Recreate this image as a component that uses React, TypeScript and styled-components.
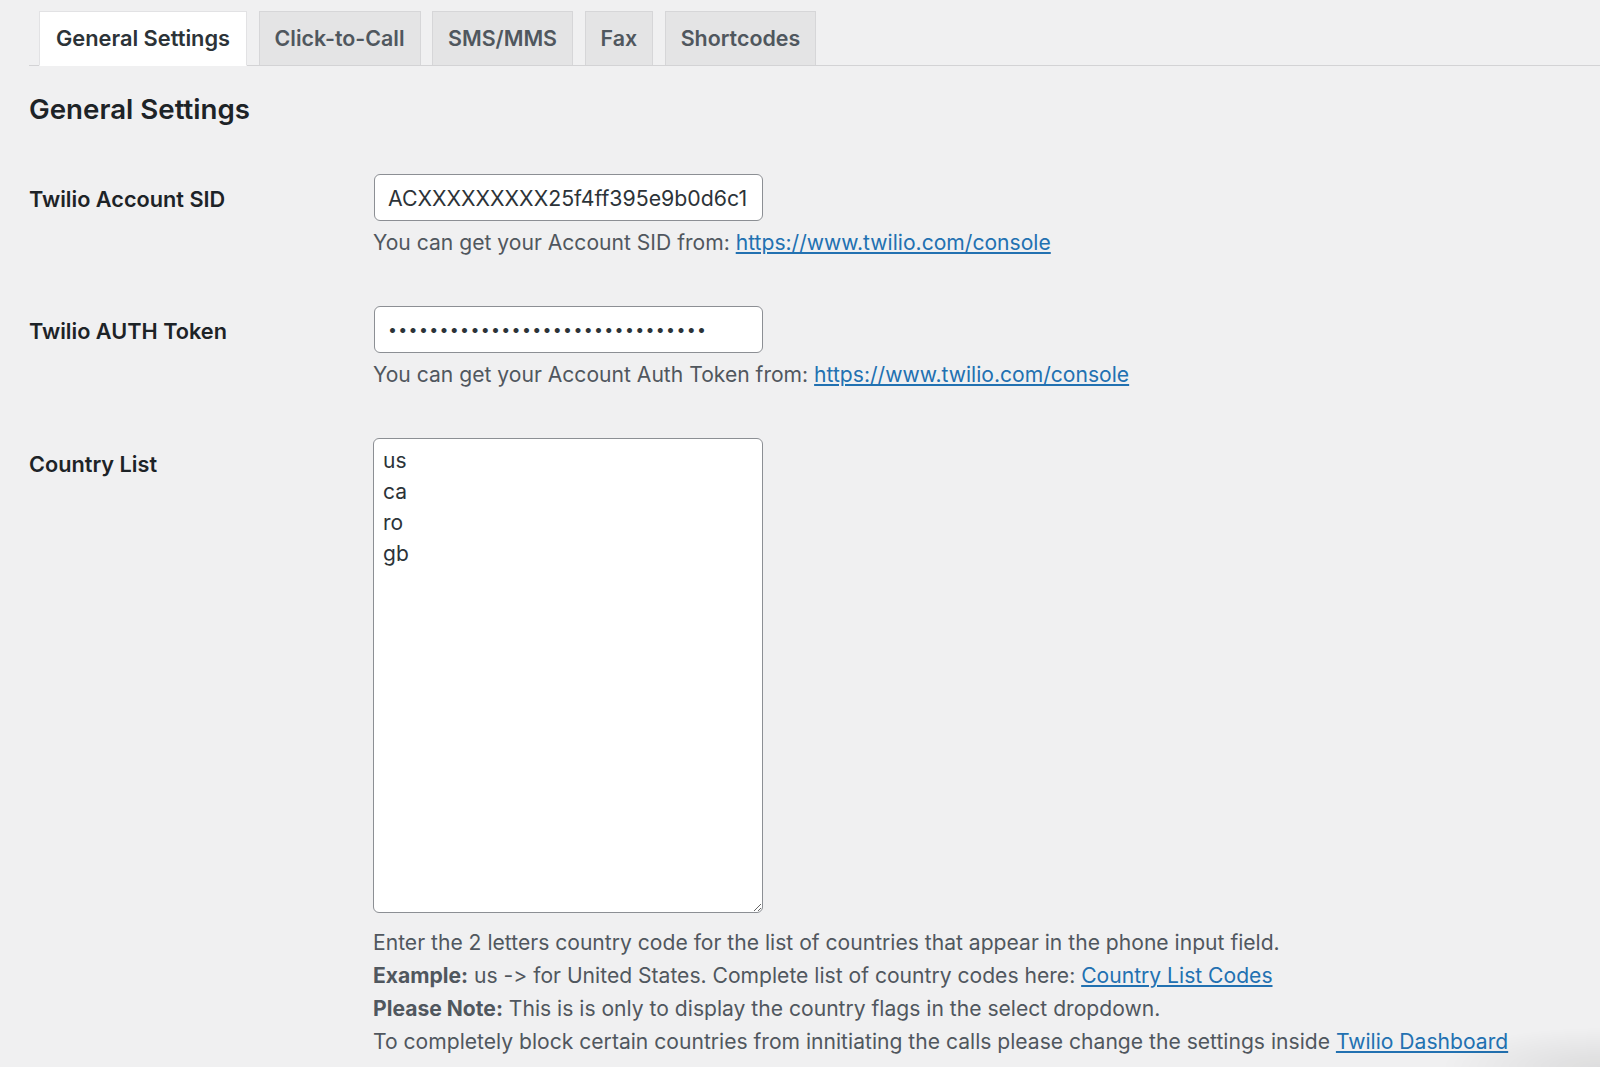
import React from "react";
import styled, { createGlobalStyle } from "styled-components";

const Global = createGlobalStyle`
  html, body { margin: 0; padding: 0; background: #f0f0f1; }
  body {
    font-family: Inter, "Noto Sans", "Liberation Sans", sans-serif;
    font-feature-settings: "calt" 0, "liga" 0;
    color: #1d2327;
    overflow: hidden;
  }
`;

const Page = styled.div`
  min-height: 1067px;
  padding: 11px 0 0 29px;
  box-sizing: border-box;
`;

const TabBar = styled.nav`
  display: flex;
  gap: 11.5px;
  padding-left: 10px;
  border-bottom: 1px solid #d3d3d5;
`;

const Tab = styled.a<{ $active?: boolean }>`
  display: block;
  height: 54px;
  box-sizing: border-box;
  padding: 0 ${(p) => (p.$active ? 16 : 15)}px;
  line-height: 53px;
  font-size: ${(p) => (p.$active ? 21.8 : 21.4)}px;
  font-weight: 600;
  text-decoration: none;
  color: ${(p) => (p.$active ? "#2c3338" : "#50575e")};
  background: ${(p) => (p.$active ? "#ffffff" : "#e4e4e5")};
  border: 1px solid ${(p) => (p.$active ? "#e2e2e4" : "#d6d6d8")};
  border-bottom: none;
  margin-bottom: -1px;
  ${(p) => (p.$active ? "border-bottom: 1px solid #ffffff; height: 55px;" : "")}
`;

const Heading = styled.h2`
  margin: 25px 0 0;
  font-size: 27.7px;
  font-weight: 600;
  line-height: 36px;
  color: #1d2327;
`;

const Form = styled.div`
  display: grid;
  grid-template-columns: 344px 1fr;
  row-gap: 46px;
  margin-top: 47px;
`;

const Label = styled.label<{ $top?: number }>`
  padding-top: ${(p) => p.$top ?? 10}px;
  font-size: 21.7px;
  font-weight: 600;
  line-height: 30px;
  color: #1d2327;
`;

const Field = styled.div<{ $lift?: number }>`
  display: flex;
  flex-direction: column;
  padding-top: ${(p) => p.$lift ?? 0}px;
`;

const TextInput = styled.input`
  width: 389px;
  height: 47px;
  box-sizing: border-box;
  margin-left: 1px;
  padding: 0 13px;
  border: 1px solid #8c8f94;
  border-radius: 6px;
  background: #fff;
  font-family: inherit;
  font-size: 21.3px;
  color: #2c3338;
  outline: none;
`;

const DotsInput = styled(TextInput)`
  letter-spacing: 1.3px;
  padding-left: 13px;
  font-size: 16px;
`;

const TextArea = styled.textarea`
  width: 390px;
  height: 475px;
  box-sizing: border-box;
  padding: 6px 9px;
  border: 1px solid #8c8f94;
  border-radius: 6px;
  background: #fff;
  font-family: inherit;
  font-size: 21px;
  line-height: 31px;
  color: #2c3338;
  outline: none;
  resize: vertical;
`;

const Desc = styled.p<{ $gap?: number }>`
  margin: ${(p) => p.$gap ?? 6}px 0 0;
  font-size: 21.1px;
  line-height: 32.7px;
  color: #50575e;
`;

const Link = styled.a`
  color: #2271b1;
  text-decoration: underline;
`;

const Shade = styled.div`
  position: fixed;
  right: 0;
  bottom: 0;
  width: 160px;
  height: 40px;
  background: radial-gradient(ellipse at 100% 100%, rgba(0,0,0,0.08), rgba(0,0,0,0) 70%);
  pointer-events: none;
`;

export default function App() {
  return (
    <>
      <Global />
      <Page>
        <TabBar>
          <Tab $active href="#">General Settings</Tab>
          <Tab href="#">Click-to-Call</Tab>
          <Tab href="#">SMS/MMS</Tab>
          <Tab href="#">Fax</Tab>
          <Tab href="#">Shortcodes</Tab>
        </TabBar>
        <Heading>General Settings</Heading>
        <Form>
          <Label>Twilio Account SID</Label>
          <Field>
            <TextInput readOnly value="ACXXXXXXXXX25f4ff395e9b0d6c1" />
            <Desc>
              You can get your Account SID from:{" "}
              <Link href="#">https://www.twilio.com/console</Link>
            </Desc>
          </Field>

          <Label>Twilio AUTH Token</Label>
          <Field>
            <DotsInput readOnly value={"•".repeat(31)} />
            <Desc>
              You can get your Account Auth Token from:{" "}
              <Link href="#">https://www.twilio.com/console</Link>
            </Desc>
          </Field>

          <Label $top={12}>Country List</Label>
          <Field $lift={1}>
            <TextArea readOnly value={"us\nca\nro\ngb"} />
            <Desc $gap={14}>
              Enter the 2 letters country code for the list of countries that appear in the phone input field.
              <br />
              <strong>Example:</strong> us -&gt; for United States. Complete list of country codes here:{" "}
              <Link href="#">Country List Codes</Link>
              <br />
              <strong>Please Note:</strong> This is is only to display the country flags in the select dropdown.
              <br />
              To completely block certain countries from innitiating the calls please change the settings inside{" "}
              <Link href="#">Twilio Dashboard</Link>
            </Desc>
          </Field>
        </Form>
      </Page>
      <Shade />
    </>
  );
}
